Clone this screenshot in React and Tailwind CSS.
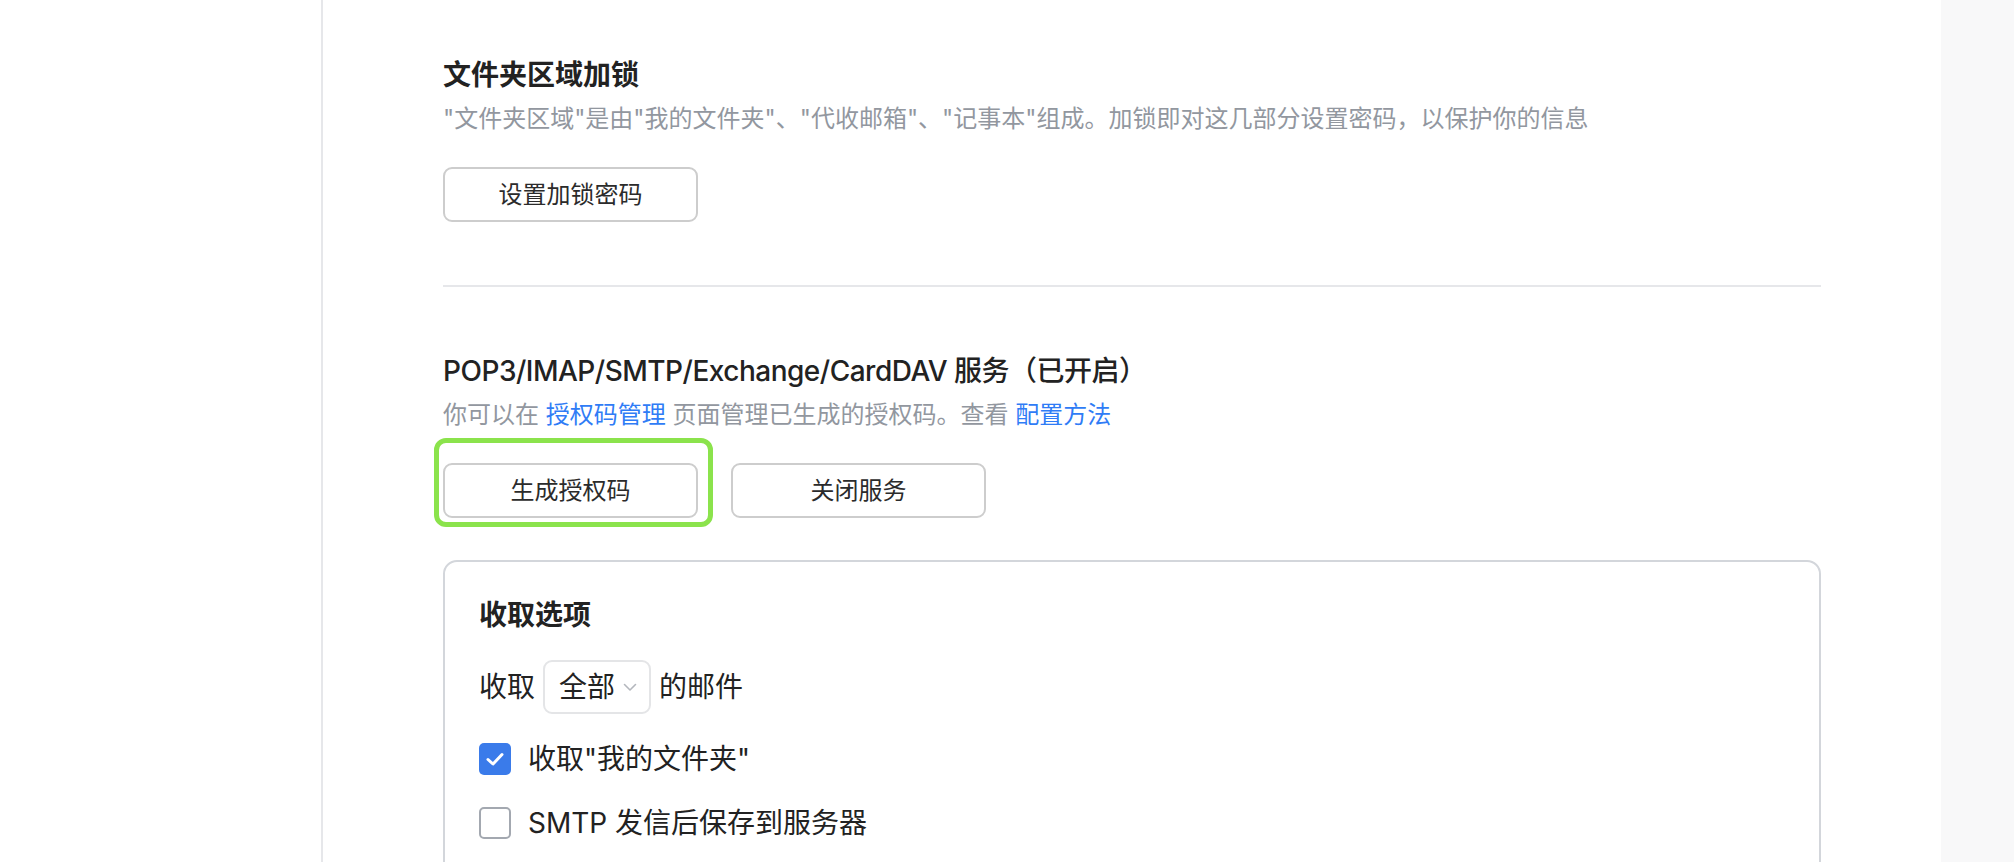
import React, { useState } from 'react';

const Chevron = () => (
  <svg width="14" height="9" viewBox="0 0 14 9" fill="none">
    <path d="M1.5 1.5 L7 7 L12.5 1.5" stroke="#b4b7bd" strokeWidth="1.6" strokeLinecap="round" strokeLinejoin="round" />
  </svg>
);

const Checkbox = ({ checked, onChange }) => (
  <button
    type="button"
    onClick={onChange}
    className={
      checked
        ? 'flex h-[32px] w-[32px] shrink-0 items-center justify-center rounded-[5px] bg-[#3a7bea]'
        : 'flex h-[32px] w-[32px] shrink-0 items-center justify-center rounded-[5px] border-2 border-[#a3a8b0] bg-white'
    }
  >
    {checked && (
      <svg width="20" height="16" viewBox="0 0 20 16" fill="none">
        <path d="M3 8.5 L8 13 L17 3.5" stroke="white" strokeWidth="3" strokeLinecap="round" strokeLinejoin="round" />
      </svg>
    )}
  </button>
);

const OutlineButton = ({ children }) => (
  <button className="flex h-[55px] w-[255px] items-center justify-center rounded-[9px] border-2 border-[#cdcdcd] bg-white text-[24px] text-[#2b2b2b]">
    {children}
  </button>
);

export default function App() {
  const [keepFolder, setKeepFolder] = useState(true);
  const [saveSent, setSaveSent] = useState(false);

  return (
    <div className="flex h-[862px] overflow-hidden bg-white font-['Inter','Noto_Sans_CJK_SC',sans-serif] text-[#222]">
      {/* left nav column (empty in this view) */}
      <div className="w-[323px] shrink-0 border-r-2 border-[#e6e7ea]" />

      <div className="flex-1 px-[120px] pt-[53px]">
        {/* folder lock */}
        <h2 className="text-[28px] leading-[44px] font-semibold text-[#222]">文件夹区域加锁</h2>
        <p className="mt-[4px] text-[24px] leading-[36px] text-[#92979f]">
          "文件夹区域"是由"我的文件夹"、"代收邮箱"、"记事本"组成。加锁即对这几部分设置密码，以保护你的信息
        </p>
        <div className="mt-[30px]">
          <OutlineButton>设置加锁密码</OutlineButton>
        </div>

        <div className="mt-[63px] h-[2px] bg-[#e6e7ea]" />

        {/* pop3 / imap service */}
        <h2 className="mt-[62px] text-[28px] leading-[44px] font-medium tracking-[-0.5px] text-[#222]">
          POP3/IMAP/SMTP/Exchange/CardDAV 服务（已开启）
        </h2>
        <p className="mt-[4px] text-[24px] leading-[36px] text-[#92979f]">
          你可以在 <a className="text-[#2f7cf6]">授权码管理</a> 页面管理已生成的授权码。查看{' '}
          <a className="text-[#2f7cf6]">配置方法</a>
        </p>
        <div className="mt-[30px] flex gap-[33px]">
          <div className="relative">
            <OutlineButton>生成授权码</OutlineButton>
            <div className="pointer-events-none absolute -top-[25px] -bottom-[9px] -left-[9px] -right-[15px] rounded-[12px] border-[5px] border-[#8be34c]" />
          </div>
          <OutlineButton>关闭服务</OutlineButton>
        </div>

        {/* receive options */}
        <div className="mt-[42px] h-[400px] rounded-[14px] border-2 border-[#d3d6db] pl-[34px] pt-[31px]">
          <h3 className="text-[28px] leading-[44px] font-semibold text-[#222]">收取选项</h3>
          <div className="mt-[23px] flex items-center text-[28px]">
            <span>收取</span>
            <div className="mx-[8px] flex h-[54px] items-center gap-[8px] rounded-[9px] border-2 border-[#e4e5e7] pl-[14px] pr-[12px]">
              <span className="text-[28px]">全部</span>
              <Chevron />
            </div>
            <span>的邮件</span>
          </div>
          <label className="mt-[23px] flex h-[44px] items-center gap-[17px] text-[28px]">
            <Checkbox checked={keepFolder} onChange={() => setKeepFolder(!keepFolder)} />
            <span>收取"我的文件夹"</span>
          </label>
          <label className="mt-[20px] flex h-[44px] items-center gap-[17px] text-[28px]">
            <Checkbox checked={saveSent} onChange={() => setSaveSent(!saveSent)} />
            <span>SMTP 发信后保存到服务器</span>
          </label>
        </div>
      </div>

      {/* right scroll gutter */}
      <div className="w-[73px] shrink-0 bg-[#f8f8f9]" />
    </div>
  );
}
